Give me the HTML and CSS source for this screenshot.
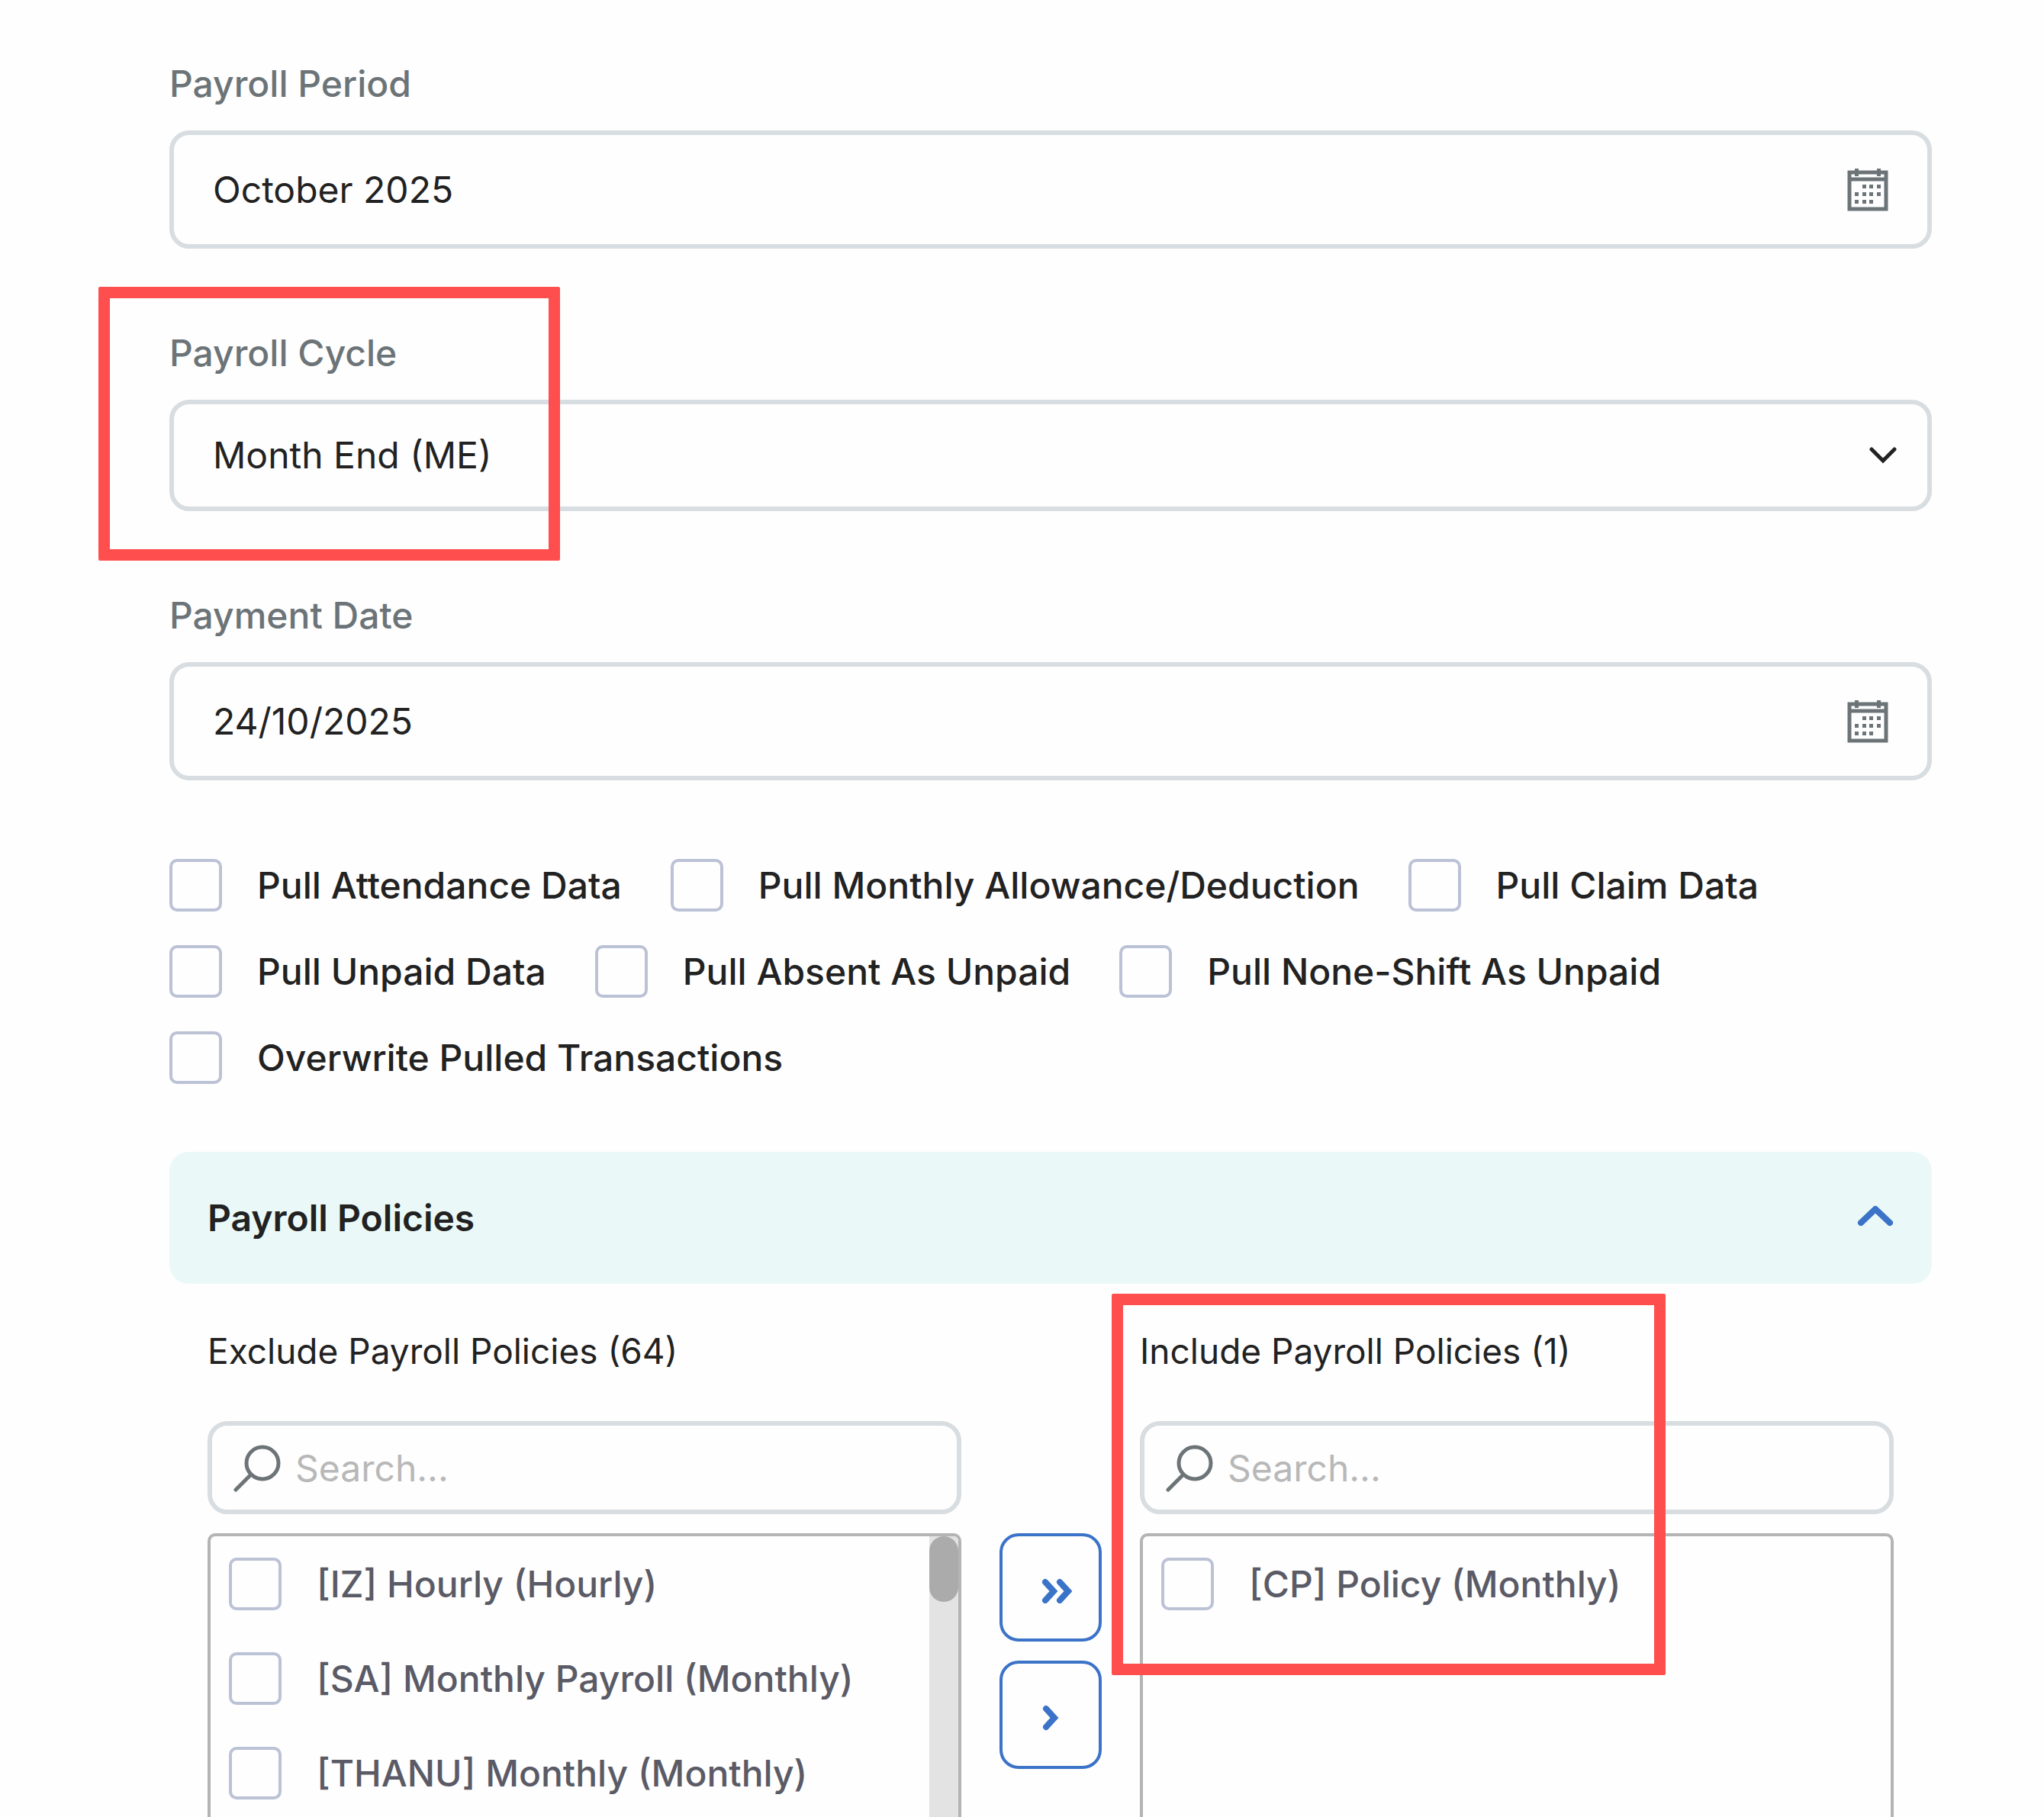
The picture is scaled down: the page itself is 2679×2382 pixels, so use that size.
FILE: index.html
```html
<!DOCTYPE html>
<html lang="en">
<head>
	<meta charset="UTF-8">
	<title>Payroll Process</title>
	<link rel="stylesheet" href="styles.css">
</head>
<body>
	<form class="payroll">
		<!-- period / cycle / date -->
		<div class="field">
			<label for="period">Payroll Period</label>
			<div class="control">
				<input id="period" class="box" type="text" value="October 2025">
				<svg class="icon calendar" viewBox="0 0 54 56">
					<path d="M3 5h48v48H3zM3 14h48" fill="none" stroke="currentColor" stroke-width="5"/>
					<path d="M10 0h5v10h-5zM39 0h5v10h-5z"/>
					<path d="M20 21h5v5h-5zM29 21h5v5h-5zM39 21h5v5h-5zM10 31h5v5h-5zM20 31h5v5h-5zM29 31h5v5h-5zM39 31h5v5h-5zM10 41h5v5h-5zM20 41h5v5h-5zM29 41h5v5h-5z"/>
				</svg>
			</div>
		</div>
		<div class="field">
			<label for="cycle">Payroll Cycle</label>
			<div class="control">
				<select id="cycle" class="box">
					<option>Month End (ME)</option>
				</select>
				<svg class="icon arrow" viewBox="0 0 36 22">
					<path d="M3 3l15 15L33 3" fill="none" stroke="currentColor" stroke-width="5" stroke-linecap="round"/>
				</svg>
			</div>
			<div class="mark mark-cycle"></div>
		</div>
		<div class="field">
			<label for="paydate">Payment Date</label>
			<div class="control">
				<input id="paydate" class="box" type="text" value="24/10/2025">
				<svg class="icon calendar" viewBox="0 0 54 56">
					<path d="M3 5h48v48H3zM3 14h48" fill="none" stroke="currentColor" stroke-width="5"/>
					<path d="M10 0h5v10h-5zM39 0h5v10h-5z"/>
					<path d="M20 21h5v5h-5zM29 21h5v5h-5zM39 21h5v5h-5zM10 31h5v5h-5zM20 31h5v5h-5zM29 31h5v5h-5zM39 31h5v5h-5zM10 41h5v5h-5zM20 41h5v5h-5zM29 41h5v5h-5z"/>
				</svg>
			</div>
		</div>

		<!-- pull options -->
		<div class="options">
			<label class="check"><input type="checkbox">Pull Attendance Data</label>
			<label class="check"><input type="checkbox">Pull Monthly Allowance/Deduction</label>
			<label class="check"><input type="checkbox">Pull Claim Data</label>
			<label class="check"><input type="checkbox">Pull Unpaid Data</label>
			<label class="check"><input type="checkbox">Pull Absent As Unpaid</label>
			<label class="check"><input type="checkbox">Pull None-Shift As Unpaid</label>
			<label class="check"><input type="checkbox">Overwrite Pulled Transactions</label>
		</div>

		<!-- policies -->
		<button type="button" class="panel-head">
			Payroll Policies
			<svg class="up" viewBox="0 0 48 38">
				<path d="M5 25L24 7l19 18" fill="none" stroke="currentColor" stroke-width="8" stroke-linecap="round" stroke-linejoin="round"/>
			</svg>
		</button>
		<div class="panel">
			<div class="col">
				<label for="exclude">Exclude Payroll Policies (64)</label>
				<div class="control">
					<input id="exclude" class="box search" type="text" placeholder="Search...">
					<svg class="search-icon" viewBox="0 0 62 62">
						<path d="M3 59l20-20" fill="none" stroke="currentColor" stroke-width="5" stroke-linecap="round"/>
						<circle cx="38" cy="24" r="21" fill="none" stroke="currentColor" stroke-width="5"/>
					</svg>
				</div>
				<div class="list">
					<div class="rows">
						<label class="check"><input type="checkbox">[IZ] Hourly (Hourly)</label>
						<label class="check"><input type="checkbox">[SA] Monthly Payroll (Monthly)</label>
						<label class="check"><input type="checkbox">[THANU] Monthly (Monthly)</label>
					</div>
					<div class="track"><div class="thumb"></div></div>
				</div>
			</div>
			<div class="moves">
				<button type="button" class="move" aria-label="Include all">
					<svg viewBox="0 0 56 42">
						<path d="M21 14l11 12-11 12M40 14l11 12-11 12" fill="none" stroke="currentColor" stroke-width="8" stroke-linecap="round"/>
					</svg>
				</button>
				<button type="button" class="move" aria-label="Include selected">
					<svg viewBox="0 0 56 42">
						<path d="M22 13l11 12-11 12" fill="none" stroke="currentColor" stroke-width="8" stroke-linecap="round"/>
					</svg>
				</button>
			</div>
			<div class="col">
				<label for="include">Include Payroll Policies (1)</label>
				<div class="control">
					<input id="include" class="box search" type="text" placeholder="Search...">
					<svg class="search-icon" viewBox="0 0 62 62">
						<path d="M3 59l20-20" fill="none" stroke="currentColor" stroke-width="5" stroke-linecap="round"/>
						<circle cx="38" cy="24" r="21" fill="none" stroke="currentColor" stroke-width="5"/>
					</svg>
				</div>
				<div class="list">
					<div class="rows">
						<label class="check"><input type="checkbox">[CP] Policy (Monthly)</label>
					</div>
				</div>
				<div class="mark mark-include"></div>
			</div>
		</div>
	</form>
</body>
</html>
```

FILE: styles.css
```css
*{margin:0;padding:0;box-sizing:border-box;}
body {
	background: #fefefe;
	color: #222;
	font: 48px/60px Inter, "Liberation Sans", sans-serif;
}
input, select, button {
	font: inherit;
	color: inherit;
}
svg {
	display: block;
	fill: currentColor;
}
.payroll {
	display: flex;
	flex-direction: column;
	min-height: 100vh;
	padding: 80px 147px 0 222px;
}
.field {
	position: relative;
	margin-bottom: 107px;
}
.field>label {
	display: block;
	margin-bottom: 31px;
	color: #6c7478;
	font-weight: 500;
}
.control {
	position: relative;
}
.box {
	display: block;
	width: 100%;
	height: 155px;
	padding: 0 51px;
	border: 6px solid #d7dde1;
	border-radius: 26px;
	background: #fefefe;
	outline: none;
}
select.box {
	height: 146px;
	appearance: none;
}
/* icons inside the boxes */
.icon {
	position: absolute;
	top: 0;
	bottom: 0;
	margin: auto 0;
	pointer-events: none;
}
.calendar {
	right: 57px;
	width: 54px;
	height: 56px;
	color: #6c7478;
}
.arrow {
	right: 46px;
	width: 36px;
	height: 22px;
}
/* checkboxes */
.options {
	display: flex;
	flex-wrap: wrap;
	gap: 44px 64px;
	margin: -4px 0 89px;
	font-weight: 500;
}
.check {
	display: flex;
	align-items: center;
	gap: 46px;
	white-space: nowrap;
}
.check input {
	width: 69px;
	height: 69px;
	appearance: none;
	border: 4px solid #bcc2d6;
	border-radius: 10px;
	background: #fefefe;
}
.panel-head {
	display: flex;
	align-items: center;
	justify-content: space-between;
	width: 100%;
	height: 173px;
	padding: 0 50px;
	border: none;
	border-radius: 25px;
	background: #eaf9f8;
	font-weight: 600;
}
.up {
	width: 48px;
	height: 38px;
	color: #3b73c8;
}
.panel {
	display: flex;
	flex: 1;
	gap: 50px;
	padding: 58px 50px 0;
}
.col {
	display: flex;
	flex-direction: column;
	position: relative;
	flex: 1;
}
.col>label {
	margin-bottom: 62px;
	font-size: 46px;
}
.search {
	height: 122px;
	padding-left: 109px;
}
.search::placeholder {
	color: #b8b8b8;
}
.search-icon {
	position: absolute;
	left: 34px;
	top: 31px;
	width: 62px;
	height: 62px;
	color: #6c7478;
	pointer-events: none;
}
.list {
	display: flex;
	flex: 1;
	margin-top: 25px;
	border: 4px solid #b4b4b4;
	border-bottom: none;
	border-radius: 10px 10px 0 0;
	overflow: hidden;
	color: #5a5b66;
	font-weight: 500;
}
.rows {
	display: flex;
	flex-direction: column;
	flex: 1;
	gap: 55px;
	padding: 28px 24px 0;
}
.track {
	width: 38px;
	background: #e3e3e3;
}
.thumb {
	height: 86px;
	border-radius: 19px;
	background: #ababab;
}
.moves {
	display: flex;
	flex-direction: column;
	gap: 25px;
	padding-top: 269px;
}
.move {
	display: flex;
	align-items: center;
	justify-content: center;
	width: 134px;
	height: 142px;
	border: 4px solid #3b73c8;
	border-radius: 25px;
	background: #fefefe;
	color: #3b73c8;
}
.move svg {
	width: 56px;
	height: 42px;
}
/* red highlight frames */
.mark {
	position: absolute;
	border: 15px solid #ff4e4e;
	border-radius: 2px;
	pointer-events: none;
}
.mark-cycle {
	left: -93px;
	top: -57px;
	width: 605px;
	height: 359px;
}
.mark-include {
	left: -37px;
	top: -45px;
	width: 726px;
	height: 500px;
}
```
